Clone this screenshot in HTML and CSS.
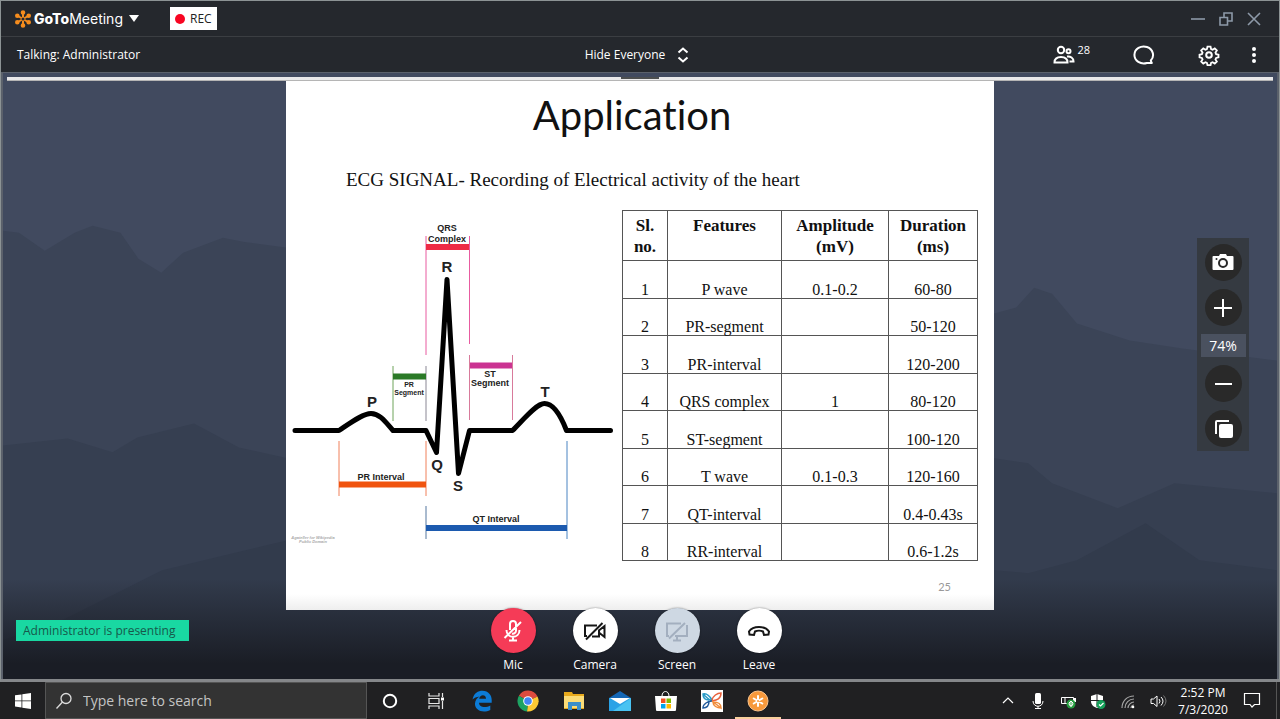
FILE: index.html
```html
<!DOCTYPE html>
<html lang="en">
<head>
  <meta charset="UTF-8">
  <meta name="viewport" content="width=device-width, initial-scale=1.0">
  <title>GoToMeeting</title>
  <link rel="stylesheet" href="styles.css">
</head>
<body>
  <div class="window">
    <header class="title-bar">
      <button class="brand">
        <svg class="brand-logo" width="16" height="18" viewBox="0 0 16 18">
          <g stroke="#f68d1e" stroke-width="2" fill="#f68d1e">
            <path d="M8 3v12M3 6l10 6M13 6L3 12" />
            <circle cx="8" cy="2.5" r="1.3" /><circle cx="8" cy="15.5" r="1.3" />
            <circle cx="2.3" cy="5.7" r="1.3" /><circle cx="13.7" cy="5.7" r="1.3" />
            <circle cx="2.3" cy="12.3" r="1.3" /><circle cx="13.7" cy="12.3" r="1.3" />
          </g>
          <circle cx="8" cy="9" r="1.5" fill="#25282d" />
        </svg>
        <span class="brand-name"><b>GoTo</b>Meeting</span>
        <svg width="10" height="7" viewBox="0 0 10 7"><path d="M0 0h10L5 7z" fill="#fff" /></svg>
      </button>
      <span class="rec"><span class="rec-dot"></span>REC</span>
      <div class="window-buttons">
        <button aria-label="Minimize">
          <svg width="16" height="16" viewBox="0 0 16 16"><path d="M1 8h14" /></svg>
        </button>
        <button aria-label="Restore">
          <svg width="16" height="16" viewBox="0 0 16 16"><path d="M2 6.500h7.500V14H2zM6 6V2h8v8h-4" /></svg>
        </button>
        <button aria-label="Close">
          <svg width="16" height="16" viewBox="0 0 16 16"><path d="M2 2l12 12M14 2L2 14" /></svg>
        </button>
      </div>
    </header>

    <div class="tool-bar">
      <span>Talking: Administrator</span>
      <button class="hide-button">
        Hide Everyone
        <svg width="12" height="16" viewBox="0 0 12 16"><path d="M1.500 5.500L6 1.500l4.500 4M1.500 10.500L6 14.500l4.500-4" /></svg>
      </button>
      <div class="tools">
        <button class="people" aria-label="Attendees">
          <svg width="22" height="20" viewBox="0 0 22 20">
            <circle cx="8" cy="5" r="3.200" /><circle cx="15.500" cy="6.200" r="2" />
            <path d="M1.500 17.500c0-4 3-5.500 6.500-5.500s6.500 1.500 6.500 5.500zM14 11.500c3.500-.5 6.500 1.500 6.500 5h-4" />
          </svg>
          <span>28</span>
        </button>
        <button aria-label="Chat">
          <svg width="22" height="22" viewBox="0 0 22 22"><path d="M17.800 16.500a9.300 8.500 0 1 0-4 2.500h5.700c-1.200-.3-1.700-1-1.700-2.500z" /></svg>
        </button>
        <button aria-label="Settings">
          <svg width="22" height="22" viewBox="0 0 22 22">
            <circle cx="11" cy="11" r="2.800" />
            <path d="M9.300 1.800h3.400l.6 2.700 1.600.7 2.400-1.500 2.300 2.300-1.500 2.400.7 1.600 2.600.6v3l-2.600.6-.7 1.600 1.500 2.400-2.300 2.200-2.400-1.500-1.600.7-.6 2.500H9.300l-.6-2.500-1.600-.7-2.400 1.500-2.300-2.200 1.500-2.400-.7-1.600-2.600-.6v-3l2.600-.6.7-1.600-1.500-2.400 2.300-2.300 2.400 1.500 1.600-.7z" transform="translate(1 1) scale(.91)" />
          </svg>
        </button>
        <button aria-label="More">
          <svg width="6" height="18" viewBox="0 0 6 18"><g class="dots"><circle cx="3" cy="3" r="2" /><circle cx="3" cy="9" r="2" /><circle cx="3" cy="15" r="2" /></g></svg>
        </button>
      </div>
    </div>

    <main class="stage">
      <svg class="mountains" viewBox="0 72 1280 607" preserveAspectRatio="none">
        <path d="M0 230l16 2 26 18 30-18 18-7 28 7 18 26 23 14 22-20 40-15 20 4 45 6 400 200 310-134 22-6 18-20 18 6 25 30 53 17 53 8 95 12v319H0z" fill="#3b4457" />
        <path d="M0 445l65-7 45 14 25-15 57-14 45 24 49 11h710l34 5 24 20 66 25 57-25 103 10v187H0z" fill="#363f51" />
        <path d="M0 640l60-20 100-50 126-30 710 30 34 3 49-13 69-37 54 37 78 10v110H0z" fill="#323b4c" />
      </svg>
      <div class="shade"></div>

      <div class="strip"><span class="strip-handle"></span></div>

      <section class="slide">
        <h1>Application</h1>
        <p class="subtitle">ECG SIGNAL- Recording of Electrical activity of the heart</p>
        <div class="slide-content">
          <svg class="ecg" viewBox="286 210 336 351">
            <!-- guide lines -->
            <g fill="none" stroke-width="1">
              <path d="M426 236v119M469.500 236v108" stroke="#e85ba0" />
              <path d="M469.500 355v65M512.500 355v65" stroke="#d87a9b" />
              <path d="M393 366v55" stroke="#6fa45a" /><path d="M426 366v55" stroke="#8a8794" />
              <path d="M339 441v55M426 441v55" stroke="#f0805a" />
              <path d="M426 506v33" stroke="#55779f" /><path d="M567 441v98" stroke="#4a84c2" />
            </g>
            <!-- interval bars -->
            <path d="M426 247h43" stroke="#ee2b45" stroke-width="6" />
            <path d="M393 376.500h33" stroke="#2b7a27" stroke-width="6" />
            <path d="M470 365.500h42" stroke="#cb3392" stroke-width="6" />
            <path d="M339 484.500h87" stroke="#f0540f" stroke-width="6" />
            <path d="M426 528h141" stroke="#1c5aaf" stroke-width="6" />
            <!-- heartbeat trace -->
            <path class="trace" d="M295 430.500h44c12-8 24-17 32-17 9 0 15 9 22 17h33l10.500 22L447 279.500l11.500 194 11-43h43c12-12 24-27 32-27 10 0 17 14 22 27h44" />
            <g class="wave-label">
              <text x="447" y="272">R</text><text x="372" y="407">P</text><text x="545" y="397">T</text>
              <text x="437" y="470">Q</text><text x="458" y="491">S</text>
            </g>
            <g class="part-label">
              <text x="447" y="231">QRS</text><text x="447" y="242">Complex</text>
              <text x="490" y="377">ST</text><text x="490" y="386">Segment</text>
              <text x="381" y="480">PR Interval</text><text x="496" y="522">QT Interval</text>
            </g>
            <g class="small-label"><text x="409" y="387">PR</text><text x="409" y="395">Segment</text></g>
            <g class="credit"><text x="313" y="539">Agateller for Wikipedia</text><text x="313" y="543">Public Domain</text></g>
          </svg>

          <table class="features">
            <colgroup><col class="col-no"><col class="col-feature"><col class="col-amp"><col></colgroup>
            <thead>
              <tr><th>Sl.<br>no.</th><th>Features</th><th>Amplitude<br>(mV)</th><th>Duration<br>(ms)</th></tr>
            </thead>
            <tbody>
              <tr><td>1</td><td>P wave</td><td>0.1-0.2</td><td>60-80</td></tr>
              <tr><td>2</td><td>PR-segment</td><td></td><td>50-120</td></tr>
              <tr><td>3</td><td>PR-interval</td><td></td><td>120-200</td></tr>
              <tr><td>4</td><td>QRS complex</td><td>1</td><td>80-120</td></tr>
              <tr><td>5</td><td>ST-segment</td><td></td><td>100-120</td></tr>
              <tr><td>6</td><td>T wave</td><td>0.1-0.3</td><td>120-160</td></tr>
              <tr><td>7</td><td>QT-interval</td><td></td><td>0.4-0.43s</td></tr>
              <tr><td>8</td><td>RR-interval</td><td></td><td>0.6-1.2s</td></tr>
            </tbody>
          </table>
        </div>
        <div class="page-number">25</div>
      </section>

      <div class="zoom-panel">
        <button aria-label="Take snapshot">
          <svg width="24" height="24" viewBox="0 0 24 24">
            <path d="M2.500 5H8l1-2h6l1 2h5.500a1 1 0 0 1 1 1v12a1 1 0 0 1-1 1h-19a1 1 0 0 1-1-1V6a1 1 0 0 1 1-1z" fill="#fff" />
            <circle cx="12" cy="12" r="4" fill="#fff" stroke="#292929" stroke-width="2" /><circle cx="5.500" cy="8" r="1" fill="#292929" />
          </svg>
        </button>
        <button aria-label="Zoom in">
          <svg width="24" height="24" viewBox="0 0 24 24"><path d="M3 12h18M12 3v18" stroke="#fff" stroke-width="2" /></svg>
        </button>
        <span class="zoom-level">74%</span>
        <button aria-label="Zoom out">
          <svg width="24" height="24" viewBox="0 0 24 24"><path d="M4 12h17" stroke="#fff" stroke-width="2" /></svg>
        </button>
        <button aria-label="Fit to window">
          <svg width="24" height="24" viewBox="0 0 24 24"><rect x="8" y="7" width="14" height="14" rx="2" fill="#fff" /><path d="M5 17V5q0-1 1-1h12" stroke="#fff" stroke-width="2" fill="none" /></svg>
        </button>
      </div>

      <div class="bottom-bar">
        <span class="presenting">Administrator is presenting</span>
        <div class="controls">
          <button class="control mic">
            <span class="circle">
              <svg width="24" height="24" viewBox="0 0 24 24"><path d="M9 11V5a3 3 0 0 1 6 0v7a3 3 0 0 1-4 2.500M5.500 11c0 9 13 9 13 0M12 17.500V21M8 21.500h8M3.500 19L20 3" /></svg>
            </span>
            Mic
          </button>
          <button class="control">
            <span class="circle">
              <svg width="24" height="24" viewBox="0 0 24 24"><path d="M14 6.500H2V17h2M9 17.500h7v-7M16.500 11l5-4v11l-5-4M3 20.500L19.500 4" /></svg>
            </span>
            Camera
          </button>
          <button class="control screen">
            <span class="circle">
              <svg width="24" height="24" viewBox="0 0 24 24"><path d="M16 4.500H2V17h2M10 17h12V6M12 17v4M8 21.500h8M4 19.500L20 4" /></svg>
            </span>
            Screen
          </button>
          <button class="control">
            <span class="circle">
              <svg width="24" height="24" viewBox="0 0 24 24"><path d="M2.500 15.500l-.5-3C6 6.500 18 6.500 22 12.500l-.5 3-4.500.5-1-3.500c-2-1-6-1-8 0L7 16z" /></svg>
            </span>
            Leave
          </button>
        </div>
      </div>
    </main>
  </div>

  <footer class="taskbar">
    <button class="start" aria-label="Start">
      <svg width="16" height="16" viewBox="0 0 16 16"><path d="M0 2.300L6.500 1.400v6.100H0zM7.300 1.300L16 0v7.500H7.300zM0 8.300h6.500v6.200L0 13.600zM7.300 8.300H16V16l-8.700-1.300z" fill="#fff" /></svg>
    </button>
    <label class="search">
      <svg width="18" height="18" viewBox="0 0 18 18"><circle cx="11" cy="6.500" r="5" /><path d="M7.500 10L1.500 16.500" /></svg>
      <input type="text" placeholder="Type here to search" aria-label="Search">
    </label>
    <nav class="apps">
      <button aria-label="Cortana">
        <svg width="22" height="22" viewBox="0 0 22 22"><circle cx="11" cy="11" r="6.200" fill="none" stroke="#fff" stroke-width="2" /></svg>
      </button>
      <button aria-label="Task View">
        <svg width="22" height="22" viewBox="0 0 22 22"><path d="M4 3v3h10V3M4 19v-3h10v3M4 8.500h10v5H4zM17.500 3v4M17.500 11v8" fill="none" stroke="#e6e6e6" stroke-width="1.200" /><path d="M16 7.500h3v3h-3z" fill="#fff" /></svg>
      </button>
      <button aria-label="Edge">
        <svg width="22" height="22" viewBox="0 0 22 22"><path d="M1.500 9.500C3 3 7 .8 11.500.8c6 0 9.200 4.700 9.200 9.200v2.700H8c.2 5 7 5.300 11.300 2.700V20C11 24 3.500 19.500 4 13.500c.2-3.500 2-5.500 4.500-7C5.500 6.800 3 8 1.500 9.500zM8.200 8.700H15c0-5-6.300-4.500-6.800 0z" fill="#0c7bd6" /></svg>
      </button>
      <button aria-label="Chrome">
        <svg width="22" height="22" viewBox="0 0 22 22">
          <path d="M11 11L1.900 5.700A10.500 10.500 0 0 1 20.500 6.500z" fill="#dd4b3e" />
          <path d="M11 11l9.500-4.500A10.500 10.500 0 0 1 10 21.500z" fill="#fcc934" />
          <path d="M11 11L10 21.500A10.500 10.500 0 0 1 1.900 5.700z" fill="#1da362" />
          <circle cx="11" cy="11" r="4.800" fill="#fff" /><circle cx="11" cy="11" r="3.800" fill="#4285f4" />
        </svg>
      </button>
      <button aria-label="File Explorer">
        <svg width="22" height="22" viewBox="0 0 22 22"><path d="M1 2h8l1 2h11v15H1z" fill="#e7a91c" /><path d="M1 6h20v12H1z" fill="#fbdc77" /><path d="M5 12h13v8h-4v-4H9v4H5z" fill="#3b8ec9" /></svg>
      </button>
      <button aria-label="Mail">
        <svg width="24" height="22" viewBox="0 0 24 22"><path d="M1 8l11-7 11 7z" fill="#1366b5" /><path d="M1 8h22v13H1z" fill="#2aa2e6" /><path d="M23 8v13H5z" fill="#49c3f2" /><path d="M2 8h20l-10 6z" fill="#fff" /></svg>
      </button>
      <button aria-label="Store">
        <svg width="24" height="22" viewBox="0 0 24 22"><path d="M8 6c0-6 7-6 7 0" fill="none" stroke="#fff" /><path d="M1 6h22l-1 14q0 1-1 1H3q-1 0-1-1z" fill="#fff" /><path d="M7 8.500h4.500V13H7z" fill="#f25022" /><path d="M12.500 8.500H17V13h-4.500z" fill="#7fba00" /><path d="M7 14h4.500v4.500H7z" fill="#00a4ef" /><path d="M12.500 14H17v4.500h-4.500z" fill="#ffb900" /></svg>
      </button>
      <button aria-label="Xodo">
        <svg width="22" height="22" viewBox="0 0 22 22">
          <path d="M0 0h22v22H0z" fill="#fff" />
          <g fill="none" stroke-width="1.500"><path d="M11 10C8 5 5 3 2 4c0 4 2 6 6 6M2 4c4 4 6 6 9 7" stroke="#2a9bc7" /><path d="M11 11c-4 0-9 3-9 7 5 0 6-4 6-7" stroke="#235b9c" /><path d="M11 10c1-4 5-7 9-7 0 6-4 7-9 8" stroke="#e8613c" /><path d="M11 11l9 7c0-5-3-6-8-6 0 4 4 6 8 6" stroke="#f08b3a" /></g>
        </svg>
      </button>
      <button class="active" aria-label="GoToMeeting">
        <svg width="22" height="22" viewBox="0 0 22 22"><circle cx="11" cy="11" r="10" fill="#f7993c" stroke="#f9c48d" /><g stroke="#fff" stroke-width="2" stroke-linecap="round"><path d="M11 6v10M6.700 8.500l8.600 5M15.300 8.500l-8.600 5" /></g><circle cx="11" cy="11" r="1" fill="#f7993c" /></svg>
      </button>
    </nav>
    <div class="tray">
      <button aria-label="Show hidden icons">
        <svg width="18" height="18" viewBox="0 0 18 18"><path d="M4 11l5-5 5 5" fill="none" stroke="#fff" stroke-width="1.200" /></svg>
      </button>
      <button aria-label="Microphone">
        <svg width="18" height="18" viewBox="0 0 18 18"><rect x="6" y="1" width="6" height="11" rx="1.500" fill="#fff" /><path d="M4 9c0 7 10 7 10 0M9 14v2.500M6 16.500h6" fill="none" stroke="#fff" /></svg>
      </button>
      <button aria-label="Battery">
        <svg width="18" height="18" viewBox="0 0 18 18"><path d="M2.500 5.500h12v6h-12zM6 6v5" fill="none" stroke="#fff" /><path d="M15 6h2v4h-2z" fill="#fff" /><circle cx="12" cy="12" r="4.500" fill="#239b3d" /><path d="M12 15v-5M10 11q0 3 2 3 2 0 2-3l-2-2z" fill="none" stroke="#fff" /></svg>
      </button>
      <button aria-label="Security">
        <svg width="18" height="18" viewBox="0 0 18 18"><path d="M8 2l6 2v5c0 4-3 6-6 7-3-1-6-3-6-7V4z" fill="#fff" /><path d="M8 2v13M2 8.500h12" stroke="#202022" /><circle cx="12" cy="12.500" r="4.500" fill="#16a05a" /><path d="M10 12.500l1.500 1.500L14.500 11" fill="none" stroke="#fff" stroke-width="1.200" /></svg>
      </button>
      <button aria-label="Network">
        <svg width="18" height="18" viewBox="0 0 18 18"><path d="M3 16C3 9 8 4 15 4M6 16c0-5 4-9 9-9M9 16c0-3 3-6 6-6M12 16c0-1.500 1.500-3 3-3" fill="none" stroke="#a5a5a5" stroke-width="1.200" /><circle cx="14" cy="15" r="1.300" fill="#fff" /></svg>
      </button>
      <button aria-label="Volume">
        <svg width="18" height="18" viewBox="0 0 18 18"><path d="M2 7h2.500L8 4v10.500L4.500 11.500H2zM10 7q2 2 0 4.500M12 5q4 4 0 8.500" fill="none" stroke="#fff" /><path d="M14.500 3.500q5 5.500 0 11" fill="none" stroke="#777" /></svg>
      </button>
      <time class="clock">2:52 PM<br>7/3/2020</time>
      <button class="notifications" aria-label="Notifications">
        <svg width="18" height="18" viewBox="0 0 18 18"><path d="M1.500 1.500h15v11h-5L9 15l-2-2.500H1.500z" fill="none" stroke="#fff" stroke-width="1.200" /></svg>
      </button>
    </div>
  </footer>
</body>
</html>
```

FILE: styles.css
```css
* {
  box-sizing: border-box;
}

body {
  margin: 0;
  min-height: 100vh;
  display: flex;
  flex-direction: column;
  font-family: "Open Sans", "Noto Sans", sans-serif;
  font-size: 12px;
  color: #fff;
  background-color: #202022;
}

button {
  display: flex;
  align-items: center;
  justify-content: center;
  padding: 0;
  border: none;
  background: none;
  color: inherit;
  font: inherit;
  cursor: pointer;
}

svg {
  display: block;
}

.window {
  flex: 1;
  display: flex;
  flex-direction: column;
  border: 1px solid #8c9394;
  border-bottom: 3px solid #85878a;
}

/* Title bar */
.title-bar {
  display: flex;
  align-items: center;
  height: 36px;
  padding: 0 17px 0 14px;
  background-color: #25282d;
  border-bottom: 1px solid #3b3e42;
}

.brand {
  gap: 6px;
}

.brand-logo {
  margin-right: -3px;
}

.brand-name {
  font-family: Inter, sans-serif;
  font-size: 14px;
}

.brand-name b {
  font-weight: 800;
}

.rec {
  display: flex;
  align-items: center;
  gap: 5px;
  height: 23px;
  margin-left: 31px;
  padding: 0 5px;
  background-color: #fff;
  color: #222;
}

.rec-dot {
  width: 10px;
  height: 10px;
  border-radius: 50%;
  background-color: #f80521;
}

.window-buttons {
  display: flex;
  gap: 12px;
  margin-left: auto;
}

.window-buttons svg {
  fill: none;
  stroke: #8d99a8;
  stroke-width: 1.6;
}

/* Tool bar */
.tool-bar {
  display: grid;
  grid-template-columns: 1fr auto 1fr;
  align-items: center;
  height: 35px;
  padding: 0 22px 0 16px;
  background-color: #25282d;
}

.tool-bar svg {
  fill: none;
  stroke: #fff;
  stroke-width: 2;
}

.tool-bar .dots {
  fill: #fff;
  stroke: none;
}

.hide-button {
  gap: 12px;
}

.tools {
  display: flex;
  align-items: center;
  justify-content: flex-end;
}

.tools button {
  margin-left: 43px;
}

.tools button:last-child {
  margin-left: 31px;
}

.people span {
  margin-left: 2px;
  font-size: 11px;
  line-height: 24px;
  align-self: flex-start;
  margin-top: -7px;
}

/* Shared screen */
.stage {
  position: relative;
  flex: 1;
  padding: 4px 4px 69px;
  background-color: #414a5f;
  border: 1px solid #5b616b;
  border-width: 1px 2px 0;
}

.mountains {
  position: absolute;
  top: 0;
  left: 0;
  width: 100%;
  height: 100%;
}

.shade {
  position: absolute;
  left: 0;
  right: 0;
  bottom: 0;
  height: 100px;
  background: linear-gradient(rgba(26, 29, 37, 0), #1a1d25 85%);
}

.strip {
  position: relative;
  height: 4px;
  background-color: #e9e9ea;
  border-bottom: 1px solid #b5b5b5;
}

.strip-handle {
  display: block;
  width: 38px;
  height: 2px;
  margin: 0 auto;
  background-color: #4d4f50;
}

.slide {
  position: relative;
  max-width: 708px;
  margin: 0 auto;
  padding: 10px 16px 14px 0;
  background: linear-gradient(#fff 97%, #eee);
  color: #111;
}

.slide h1 {
  margin: 0;
  font-family: Lato, Carlito, sans-serif;
  font-size: 40px;
  font-weight: 400;
  line-height: 48px;
  text-align: center;
  font-variant-ligatures: none;
}

.subtitle {
  margin: 29px 0 18px 60px;
  font-family: "Liberation Serif", serif;
  font-size: 19px;
  line-height: 24px;
}

.slide-content {
  display: flex;
}

.ecg {
  flex: 1;
  min-width: 0;
}

.trace {
  fill: none;
  stroke: #000;
  stroke-width: 5;
  stroke-linecap: round;
  stroke-linejoin: round;
}

.ecg text {
  font-family: "Liberation Sans", sans-serif;
  font-weight: bold;
  text-anchor: middle;
  fill: #222;
}

.wave-label text {
  font-size: 15px;
}

.part-label text {
  font-size: 9px;
}

.small-label text {
  font-size: 7px;
}

.ecg .credit text {
  font-size: 4px;
  font-style: italic;
  fill: #aaa;
}

.features {
  width: 356px;
  height: 351px;
  table-layout: fixed;
  border-collapse: collapse;
  font-family: "Liberation Serif", serif;
  font-size: 16px;
  line-height: 16px;
  text-align: center;
}

.features th,
.features td {
  padding: 0;
  border: 1px solid #555;
}

.features th {
  height: 50px;
  font-size: 17px;
  line-height: 21px;
  vertical-align: top;
  padding-top: 4px;
}

.features td {
  vertical-align: bottom;
}

.col-no {
  width: 45px;
}

.col-feature {
  width: 114px;
}

.col-amp {
  width: 107px;
}

.page-number {
  margin: 17px 27px 0 0;
  font-family: Lato, sans-serif;
  font-size: 11px;
  line-height: 18px;
  text-align: right;
  color: #999;
}

/* Zoom panel */
.zoom-panel {
  position: absolute;
  top: 165px;
  right: 28px;
  width: 52px;
  padding: 6px 3px 4px;
  display: flex;
  flex-direction: column;
  align-items: center;
  gap: 8px;
  background-color: #353a41;
}

.zoom-panel button {
  width: 37px;
  height: 37px;
  border-radius: 50%;
  background-color: #292929;
}

.zoom-level {
  width: 45px;
  font-size: 14px;
  line-height: 23px;
  text-align: center;
  background-color: #4a515f;
}

/* Meeting controls */
.bottom-bar {
  position: absolute;
  left: 0;
  right: 0;
  bottom: 0;
  display: flex;
  justify-content: center;
  padding: 0 8px 5px 0;
}

.presenting {
  position: absolute;
  left: 13px;
  bottom: 38px;
  padding: 0 14px 0 7px;
  line-height: 21px;
  background-color: #19d8a2;
  color: #17584b;
}

.controls {
  display: flex;
}

.control {
  flex-direction: column;
  gap: 3px;
  width: 82px;
  line-height: 18px;
}

.circle {
  display: flex;
  align-items: center;
  justify-content: center;
  width: 45px;
  height: 45px;
  border-radius: 50%;
  background-color: #fff;
  box-shadow: 0 0 2px rgba(0, 0, 0, 0.5);
}

.circle svg {
  fill: none;
  stroke: #161616;
  stroke-width: 2;
}

.mic .circle {
  background-color: #f53b57;
}

.mic svg {
  stroke: #fff;
}

.screen .circle {
  background-color: #ced8e3;
}

.screen svg {
  stroke: #a3afbf;
}

/* Taskbar */
.taskbar {
  display: flex;
  height: 37px;
  background-color: #202022;
}

.start {
  width: 45px;
}

.search {
  display: flex;
  align-items: center;
  gap: 10px;
  width: 322px;
  padding: 0 9px;
  background-color: #333;
  border: 1px solid #555;
}

.search svg {
  fill: none;
  stroke: #ddd;
  stroke-width: 1.3;
}

.search input {
  flex: 1;
  min-width: 0;
  padding: 0;
  border: none;
  outline: none;
  background: none;
  color: #fff;
  font: inherit;
  font-size: 14px;
}

.search input::placeholder {
  color: #c4c4c4;
}

.apps {
  display: flex;
}

.apps button {
  width: 46px;
}

.apps .active {
  border-top: 2px solid transparent;
  border-bottom: 2px solid #f9cf9c;
}

.tray {
  display: flex;
  align-items: center;
  margin-left: auto;
  margin-right: 3px;
  padding-right: 5px;
  border-right: 1px solid #555;
}

.tray button {
  width: 30px;
}

.clock {
  width: 60px;
  line-height: 17px;
  text-align: center;
}

.tray .notifications {
  width: 38px;
}
```
